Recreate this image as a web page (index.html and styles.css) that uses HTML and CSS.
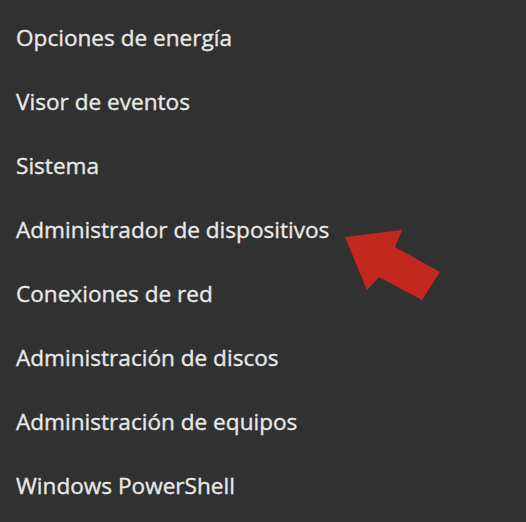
FILE: index.html
```html
<!DOCTYPE html>
<html lang="es">
<head>
<meta charset="utf-8">
<title>Menú</title>
<link rel="stylesheet" href="styles.css">
</head>
<body>
<div class="menu">
  <ul class="items">
    <li class="item">Opciones de energía</li>
    <li class="item">Visor de eventos</li>
    <li class="item">Sistema</li>
    <li class="item">Administrador de dispositivos</li>
    <li class="item">Conexiones de red</li>
    <li class="item">Administración de discos</li>
    <li class="item">Administración de equipos</li>
    <li class="item">Windows PowerShell</li>
  </ul>
  <svg class="arrow" width="105" height="80" viewBox="0 0 105 80" aria-hidden="true">
    <polygon points="5,12 62,5 55,22 100,47 82,75 39,52 27,65" fill="#c3281f"/>
  </svg>
</div>
</body>
</html>
```
FILE: styles.css
```css
html, body {
  margin: 0;
  padding: 0;
  background: #313131;
}
body {
  width: 526px;
  height: 522px;
  overflow: hidden;
}
.menu {
  position: relative;
  width: 526px;
  height: 522px;
  background: #313131;
}
.items {
  list-style: none;
  margin: 0;
  padding: 6px 0 0 16px;
}
.item {
  height: 64px;
  line-height: 64px;
  font-family: "Open Sans", "Noto Sans", sans-serif;
  font-size: 22.6px;
  color: #e8e8e8;
  -webkit-text-stroke: 0.35px #e8e8e8;
  white-space: nowrap;
}
.arrow {
  position: absolute;
  left: 340px;
  top: 225px;
}
```
